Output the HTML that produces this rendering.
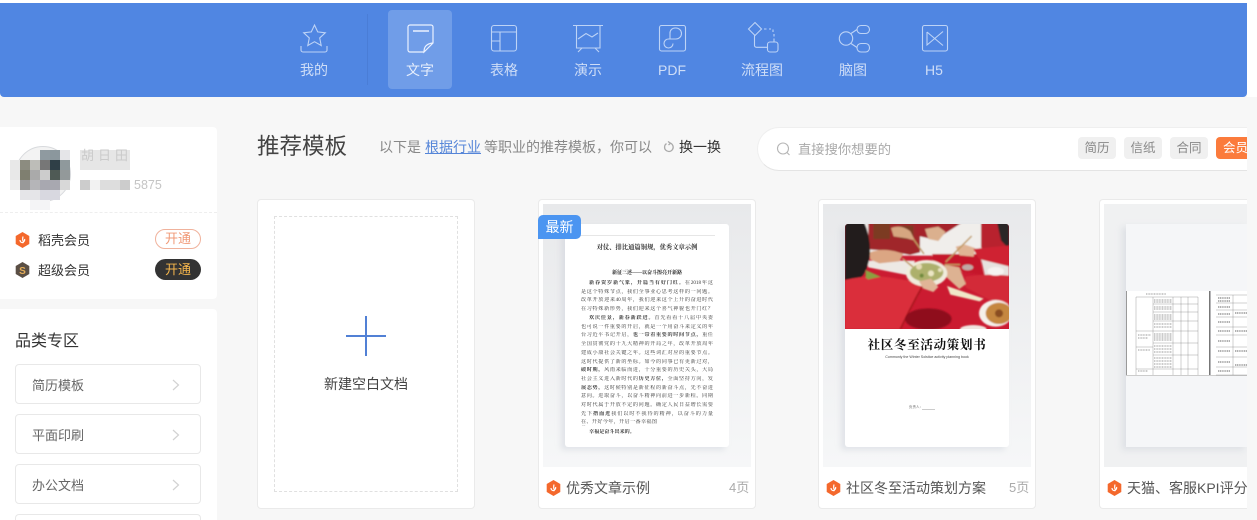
<!DOCTYPE html>
<html lang="zh"><head><meta charset="utf-8"><title>推荐模板</title>
<style>
*{box-sizing:border-box}
html,body{margin:0;padding:0;width:1257px;height:520px;overflow:hidden}
body{position:relative;background:#f7f7f7;font-family:"Liberation Sans","Noto Sans CJK SC",sans-serif}
#w{position:absolute;left:0;top:0;width:1257px;height:520px;overflow:hidden;background:#f7f7f7}
.a,.t{position:absolute}
.t{white-space:nowrap;line-height:20px}
.card{position:absolute;background:#fff;border:1px solid #eaeaea;border-radius:4px;top:199px;height:310px;width:218px;overflow:hidden}
.thumb{position:absolute;top:4px;left:4px;width:208px;height:263px;background:linear-gradient(#e8e9eb,#f6f7f8)}
.page{position:absolute;top:20px;left:22px;width:164px;height:223px;background:#fff;border-radius:3px;overflow:hidden;box-shadow:-4px 3px 6px rgba(190,195,205,.35)}
.row{position:absolute;left:15px;width:186px;height:40px;background:#fff;border:1px solid #e8e8e8;border-radius:4px;color:#666;font-size:13px;line-height:41px;padding-left:16px}
.row svg{position:absolute;left:156px;top:14px}
.tag{position:absolute;top:137px;width:38px;height:22px;background:#f0f0f0;border-radius:4px;color:#888;font-size:12.5px;line-height:22px;text-align:center}
.nav{position:absolute;top:60px;height:20px;line-height:20px;font-size:14px;color:rgba(255,255,255,.72);transform:translateX(-50%);white-space:nowrap}
.ln{position:absolute;left:0;width:132px;height:7px;font:5.1px/7px "Liberation Serif","Noto Serif CJK SC",serif;color:#333;text-align:justify;text-align-last:justify;overflow:hidden}
.ttl{position:absolute;font-size:14px;line-height:20px;top:278px;color:#555;white-space:nowrap}
.pg{position:absolute;font-size:13px;line-height:20px;top:278px;color:#aaa;white-space:nowrap}
.mo{position:absolute;width:10px;height:10px}
</style></head><body>
<div id="w">

<div class="a" style="left:0;top:0;width:1257px;height:3px;background:#fff"></div>
<div class="a" style="left:0;top:3px;width:1247px;height:94px;background:#5086e2;border-radius:0 0 4px 4px"></div>
<div class="a" style="left:367px;top:14px;width:1px;height:71px;background:#4a7dd6"></div>
<div class="a" style="left:388px;top:10px;width:64px;height:79px;background:#709de8;border-radius:4px"></div>

<svg class="a" style="left:0;top:0" width="1257" height="97" viewBox="0 0 1257 97" fill="none" stroke="#bdd3f6" stroke-width="1.1">
<path d="M314.500 25l3.200 6.900 7.600.9-5.600 5.200 1.500 7.500-6.700-3.800-6.700 3.800 1.500-7.500-5.600-5.200 7.600-.9z"/>
<path d="M301 46v4a2 2 0 0 0 2 2h22a2 2 0 0 0 2-2v-4"/>
<path d="M424 52h-14a2 2 0 0 1-2-2V27a2 2 0 0 1 2-2h21a2 2 0 0 1 2 2v16l-9 9c0-5 2-8 8.500-9" stroke="#eaf1ff" stroke-width="1.200"/>
<path d="M413 31h16" stroke="#eaf1ff" stroke-width="1.500"/>
<rect x="491.500" y="25.500" width="25" height="25.500" rx="2.500"/>
<path d="M491.500 32h25M500 32v19M491.500 41H500"/>
<path d="M573 25.500h30M576.500 25.500V48h23.500V25.500M582 48l-4 4M595 48l4 4M578 39l8-5.500 6 3.500 6-4"/>
<rect x="659.500" y="25.500" width="26" height="25.500" rx="2"/>
<path d="M670 39v-5.500a5 5 0 0 1 5-5.500h1a5.500 5.500 0 0 1 0 11h-7.500a4.500 4.500 0 1 0 4.500 4.500"/>
<path d="M755 22.500l6.500 6.500-6.500 6.500-6.500-6.500z"/>
<path d="M764 29h2.500M769 29h2M773 29.500v2.500M774 34v2.500M774 38.500v3"/>
<rect x="767.500" y="42" width="10.500" height="10" rx="2.500"/>
<path d="M754.500 35.500V45a2 2 0 0 0 2 2.300h11"/>
<circle cx="846" cy="38.500" r="6.700"/>
<rect x="857" y="25.500" width="12.500" height="8" rx="4"/>
<rect x="857" y="43.500" width="12.500" height="8.500" rx="4"/>
<path d="M851 33.500l6-4M851 43.500l6 4"/>
<rect x="922.500" y="25.500" width="25" height="25.500" rx="2"/>
<path d="M927 32v13l16-13.500M927 32l16 13.500"/>
</svg>

<div class="nav" style="left:314px">我的</div>
<div class="nav" style="left:420px;color:#e6eefc">文字</div>
<div class="nav" style="left:504px">表格</div>
<div class="nav" style="left:588px">演示</div>
<div class="nav" style="left:672px">PDF</div>
<div class="nav" style="left:762px">流程图</div>
<div class="nav" style="left:853px">脑图</div>
<div class="nav" style="left:934px">H5</div>

<!-- user card -->
<div class="a" style="left:0;top:127px;width:217px;height:172px;background:#fff;border-radius:0 4px 4px 0"></div>
<div class="a" style="left:0;top:212px;width:217px;border-top:1px dashed #eee"></div>
<div class="a" style="left:15px;top:146px;width:56px;height:56px;border-radius:50%;border:1px solid #d8dadd;background:#f3f3f3"></div>
<div class="mo" style="left:40px;top:150px;background:#8f9aa0"></div><div class="mo" style="left:50px;top:150px;background:#8b979d"></div><div class="mo" style="left:60px;top:150px;background:#e5e5e8"></div>
<div class="mo" style="left:10px;top:160px;background:#e8e8e8"></div><div class="mo" style="left:20px;top:160px;background:#8c8c80"></div><div class="mo" style="left:30px;top:160px;background:#bdbdb8"></div><div class="mo" style="left:40px;top:160px;background:#777"></div><div class="mo" style="left:50px;top:160px;background:#2f3f47"></div><div class="mo" style="left:60px;top:160px;background:#8f999c"></div>
<div class="mo" style="left:10px;top:170px;background:#e8e8e8"></div><div class="mo" style="left:20px;top:170px;background:#7f7f70"></div><div class="mo" style="left:30px;top:170px;background:#aaa"></div><div class="mo" style="left:40px;top:170px;background:#ccc"></div><div class="mo" style="left:50px;top:170px;background:#4f5a55"></div><div class="mo" style="left:60px;top:170px;background:#93999a"></div>
<div class="mo" style="left:10px;top:180px;background:#eee"></div><div class="mo" style="left:20px;top:180px;background:#999"></div><div class="mo" style="left:30px;top:180px;background:#b5b5b8"></div><div class="mo" style="left:40px;top:180px;background:#a8a8b0"></div><div class="mo" style="left:50px;top:180px;background:#a8a8b0"></div><div class="mo" style="left:60px;top:180px;background:#d8d8d8"></div>
<div class="mo" style="left:20px;top:190px;background:#e5e5e8"></div><div class="mo" style="left:30px;top:190px;background:#e5e5e8"></div><div class="mo" style="left:40px;top:190px;background:#d8d8e0"></div><div class="mo" style="left:50px;top:190px;background:#d8d8e0"></div>
<div class="mo" style="left:30px;top:200px;width:20px;background:#f4f4f6"></div>

<div class="a" style="left:80px;top:150px;width:50px;height:20px;background:#e6e6e6"></div>
<div class="t" style="left:81px;top:146px;width:50px;color:#cacaca;font-size:13px;letter-spacing:4px">胡日田</div>
<div class="a" style="left:80px;top:180px;width:10px;height:10px;background:#ccc"></div>
<div class="a" style="left:90px;top:180px;width:10px;height:10px;background:#f2f2f2"></div>
<div class="a" style="left:100px;top:180px;width:20px;height:10px;background:#ddd"></div>
<div class="a" style="left:120px;top:180px;width:10px;height:10px;background:#ccc"></div>
<div class="t" style="left:134px;top:175px;color:#c4c4c4;font-size:12.500px">5875</div>

<svg class="a" style="left:15px;top:232px" width="15" height="16" viewBox="0 0 15 16"><path d="M7.500 0l6.800 4v8l-6.800 4-6.800-4V4z" fill="#f4682c"/><path d="M5 8c0 2 1.500 3 3.500 2.500M8 4.500c-.5 2-.5 4 .5 5.500 1-1 1.500-2 1-3" stroke="#fff" stroke-width="1.200" fill="none"/></svg>
<div class="t" style="left:38px;top:231px;font-size:13px;color:#333">稻壳会员</div>
<div class="a" style="left:155px;top:229px;width:46px;height:20px;border:1px solid #f0b29c;border-radius:10px;color:#f09a78;font-size:13px;line-height:18px;text-align:center">开通</div>

<svg class="a" style="left:15px;top:262px" width="15" height="16" viewBox="0 0 15 16"><path d="M7.500 0l6.800 4v8l-6.800 4-6.800-4V4z" fill="#5a4f45"/><text x="7.500" y="12" font-size="10" font-weight="700" text-anchor="middle" fill="#e5ad58" font-family="Liberation Sans">S</text></svg>
<div class="t" style="left:38px;top:261px;font-size:13px;color:#333">超级会员</div>
<div class="a" style="left:155px;top:259px;width:46px;height:21px;background:#333;border-radius:11px;color:#f5b64c;font-size:13px;line-height:21px;text-align:center">开通</div>

<!-- category card -->
<div class="a" style="left:0;top:309px;width:217px;height:211px;background:#fff;border-radius:0 4px 0 0"></div>
<div class="t" style="left:15px;top:332px;font-size:16px;color:#333">品类专区</div>
<div class="row" style="top:364px">简历模板<svg width="8" height="12" viewBox="0 0 8 12" fill="none" stroke="#d2d2d2" stroke-width="1.200"><path d="M1 1l5.500 5L1 11"/></svg></div>
<div class="row" style="top:414px">平面印刷<svg width="8" height="12" viewBox="0 0 8 12" fill="none" stroke="#d2d2d2" stroke-width="1.200"><path d="M1 1l5.500 5L1 11"/></svg></div>
<div class="row" style="top:464px">办公文档<svg width="8" height="12" viewBox="0 0 8 12" fill="none" stroke="#d2d2d2" stroke-width="1.200"><path d="M1 1l5.500 5L1 11"/></svg></div>
<div class="row" style="top:514px;height:6px;border-bottom:0;border-radius:4px 4px 0 0"></div>

<!-- heading -->
<div class="t" style="left:257px;top:137px;font-size:22.500px;line-height:20px;color:#444">推荐模板</div>
<div class="t" style="left:379px;top:137px;font-size:14px;color:#888">以下是</div>
<div class="t" style="left:425px;top:137px;font-size:14px;color:#5585d8;text-decoration:underline">根据行业</div>
<div class="t" style="left:484px;top:137px;font-size:14px;color:#888">等职业的推荐模板，你可以</div>
<svg class="a" style="left:663px;top:141px" width="12" height="12" viewBox="0 0 12 12" fill="none" stroke="#aaa" stroke-width="1.300"><path d="M7.500 2.200A4.300 4.300 0 1 1 3.500 2.600"/><path d="M5 .5l2.500 1.700L5.500 4"/></svg>
<div class="t" style="left:679px;top:137px;font-size:14px;color:#333">换一换</div>

<!-- search -->
<div class="a" style="left:757px;top:127px;width:490px;height:44px;background:#fff;border:1px solid #efefef;border-bottom-color:#e4e4e4;border-right:0;border-radius:22px 0 0 22px"></div>
<svg class="a" style="left:776px;top:142px" width="15" height="15" viewBox="0 0 15 15" fill="none" stroke="#b5b5b5" stroke-width="1.100"><circle cx="7" cy="6.500" r="5.500"/><path d="M11 10.500l2.500 2.500"/></svg>
<div class="t" style="left:798px;top:140px;font-size:13.300px;color:#aaa">直接搜你想要的</div>
<div class="tag" style="left:1078px">简历</div>
<div class="tag" style="left:1124px">信纸</div>
<div class="tag" style="left:1170px">合同</div>
<div class="a" style="left:1216px;top:137px;width:31px;height:22px;background:#fb7b3c;border-radius:4px 0 0 4px;overflow:hidden;color:#fff;font-size:12.500px;line-height:22px;padding-left:7px;white-space:nowrap">会员</div>

<!-- blank card -->
<div class="card" style="left:257px"></div>
<div class="a" style="left:274px;top:216px;width:184px;height:276px;border:1px dashed #e0e0e0"></div>
<div class="a" style="left:346px;top:335px;width:40px;height:2px;background:#5180d5"></div>
<div class="a" style="left:365px;top:316px;width:2px;height:40px;background:#5180d5"></div>
<div class="t" style="left:324px;top:374px;font-size:14px;color:#444">新建空白文档</div>

<!-- card 2 -->
<div class="card" style="left:538px">
 <div class="thumb"><div class="page">
  <div class="a" style="left:0;top:11px;width:150px;height:1px;background:#e6e6e6"></div>
  <div class="a" style="left:0;top:19px;width:164px;text-align:center;font:700 6.300px/10px 'Liberation Serif','Noto Serif CJK SC',serif;color:#333;white-space:nowrap">对仗、排比通篇铜规，优秀文章示例</div>
  <div class="a" style="left:0;top:46px;width:164px;text-align:center;font:700 5px/7px 'Liberation Serif','Noto Serif CJK SC',serif;color:#222;white-space:nowrap">新征三述——以奋斗擦亮开新路</div>
  <div style="position:absolute;left:16px;top:0;width:132px;height:223px">
  <div class="ln" style="top:56px;left:8px;width:124px"><b>新春贺岁新气象，开篇当有好门红。</b>在2018年这</div>
  <div class="ln" style="top:65px">是这个特殊节点，我们全事业心思考这样的一问题。</div>
  <div class="ln" style="top:73px">改革开放迎来40周年，我们迎来这个上升的奋进时代</div>
  <div class="ln" style="top:82px">在习特殊新形势，我们迎来这个喜气神貌也开门红？</div>
  <div class="ln" style="top:91px;left:8px;width:124px"><b>欢庆佳景，新春新跃进。</b>首先看看十八届中央委</div>
  <div class="ln" style="top:100px">也可说一件重要的开启，就是一个用奋斗来定义的年</div>
  <div class="ln" style="top:108px">台习近平书记开启，<b>也一带着重要的时间节点，</b>重任</div>
  <div class="ln" style="top:117px">全国贯彻党的十九大精神的开局之年，改革开放周年</div>
  <div class="ln" style="top:126px">建成小康社会关键之年。这些词汇对应的重要节点。</div>
  <div class="ln" style="top:135px">这时代提供了新的坐标。如今的同事已有更新过对，</div>
  <div class="ln" style="top:143px"><b>破时期，</b>风雨来临而进，十分重要的历史关头，大局</div>
  <div class="ln" style="top:152px">社会主义进入新时代的<b>历史方位，</b>全面坚持方向，发</div>
  <div class="ln" style="top:161px"><b>展态势，</b>这时候特别是新征程的新奋斗点，先不奋进</div>
  <div class="ln" style="top:169px">意向。进取奋斗，以奋斗精神向前进一步新程。同期</div>
  <div class="ln" style="top:178px">对时代属于开放不定的问题。确定人民日益增长需要</div>
  <div class="ln" style="top:187px">先下<b>撸而进</b>我们以时不我待的精神，以奋斗的力量</div>
  <div class="ln" style="top:195px;width:76px;text-align-last:left">在、开好今年，开启一番幸福图景。</div>
  <div class="ln" style="top:205px;left:8px;width:60px;text-align-last:left"><b>幸福是奋斗出来的。</b></div>
  </div>
 </div></div>
 <svg class="a" style="left:7px;top:280px" width="15" height="16" viewBox="0 0 15 16"><path d="M7.500 0l6.800 4v8l-6.800 4-6.800-4V4z" fill="#f4682c"/><path d="M5 8c0 2 1.500 3 3.500 2.500M8 4.500c-.5 2-.5 4 .5 5.500 1-1 1.500-2 1-3" stroke="#fff" stroke-width="1.200" fill="none"/></svg>
 <div class="ttl" style="left:27px">优秀文章示例</div>
 <div class="pg" style="left:190px">4页</div>
</div>
<div class="a" style="left:538px;top:215px;width:43px;height:24px;background:#4b95f1;border-radius:5px 5px 5px 0;color:#fff;font-size:14px;line-height:24px;text-align:center">最新</div>

<!-- card 3 -->
<div class="card" style="left:818px">
 <div class="thumb"><div class="page">
  <svg class="a" style="left:0;top:0" width="164" height="105" viewBox="0 0 492 315">
   <defs><filter id="b" x="-5%" y="-5%" width="110%" height="110%"><feGaussianBlur stdDeviation="2.500"/></filter></defs>
   <rect width="492" height="315" fill="#cb1b31"/>
   <g filter="url(#b)">
   <rect x="0" y="-10" width="492" height="105" fill="#f0eeeb"/>
   <path d="M65 110h145l-15 45-125-25z" fill="#ede9e4"/>
   <path d="M70-10h155v95l-30 8-60-12-65-5z" fill="#a0282a"/>
   <path d="M85-5h50v50H85zM165 5h40v40h-40z" fill="#7c3a24"/>
   <path d="M215-10h145l-70 45-30 10-45-10z" fill="#a5222a"/>
   <path d="M408-10h84v135l-55-30-29-25z" fill="#b8212e"/>
   <path d="M408 105l84 20v40h-70z" fill="#e6e3df"/>
   <path d="M262 90h146v35l10 30-110-20-46-20z" fill="#c5152b"/>
   <path d="M0-10h55q22 45 20 100-5 50-35 80H0z" fill="#231f1e"/>
   <path d="M455-10h37v85l-24-25z" fill="#2c2826"/>
   <path d="M75 85q45-17 100 5l-12 22-60 6-28-12z" fill="#dba683"/>
   <path d="M138 12q30-12 58 10l14 28-24-7-40-6z" fill="#d6a680"/>
   <path d="M240 15l40-7 22 16-22 27-30-6z" fill="#dbb08e"/>
   <path d="M332 68l28-6 30 10-4 26-42-4z" fill="#e0b494"/>
   <path d="M385 75q55-6 107-10v62l-90-22z" fill="#cf2433"/>
   <path d="M298 122l45 8 20 50-20 15-38-35z" fill="#ddb292"/>
   <path d="M362 158q60-10 130-3v85l-62-15-68-35z" fill="#d32a38"/>
   <path d="M0 168q85-20 160-3l78 12q-30 50-72 138H0z" fill="#da2f3b"/>
   <path d="M238 177q-30 50-72 138" stroke="#a9121f" stroke-width="5" fill="none"/>
   <ellipse cx="245" cy="148" rx="62" ry="40" fill="#f0ecdd"/>
   <ellipse cx="245" cy="145" rx="50" ry="28" fill="#adb06c"/>
   <circle cx="222" cy="128" r="9" fill="#e7dcb6"/><circle cx="258" cy="148" r="9" fill="#ece6c4"/><circle cx="285" cy="138" r="6" fill="#e8e2c0"/><circle cx="230" cy="155" r="6" fill="#6f8a3c"/>
   <path d="M62 138l45 20-38 8-7-6z" fill="#8aa040"/>
   <path d="M222 172l36-8 22 25-15 15-30-10z" fill="#e0b496"/>
   <path d="M306 186l110 38-12 8-88-20z" fill="#f0e8c8"/>
   <ellipse cx="368" cy="130" rx="17" ry="9" fill="#c0aaa6"/>
   <ellipse cx="452" cy="142" rx="25" ry="13" fill="#f5f3f0"/>
   <ellipse cx="452" cy="268" rx="50" ry="40" fill="#f5f0ea"/>
   <ellipse cx="462" cy="268" rx="40" ry="32" fill="#c5873f"/>
   <circle cx="462" cy="268" r="12" fill="#8a4d20"/>
   <ellipse cx="385" cy="316" rx="40" ry="13" fill="#f0e5e0"/>
   <ellipse cx="250" cy="285" rx="70" ry="32" fill="#8f0f1f"/>
   <path d="M205 45l32 45M380 36l-78 78M172 103l32 26M300 122h45" stroke="#c09a60" stroke-width="4.500" fill="none"/>
   </g>
  </svg>
  <div class="a" style="left:0;top:112px;width:164px;text-align:center;font:700 12.500px/18px 'Liberation Serif','Noto Serif CJK SC',serif;color:#111;white-space:nowrap;letter-spacing:.7px">社区冬至活动策划书</div>
  <div class="a" style="left:0;top:130px;width:164px;text-align:center;font:3.600px/6px 'Liberation Sans',sans-serif;color:#444;white-space:nowrap">Commonly the Winter Solstice activity planning book</div>
  <div class="a" style="left:64px;top:181px;font:3.500px/5px 'Liberation Sans','Noto Sans CJK SC',sans-serif;color:#777;white-space:nowrap">负责人：</div>
  <div class="a" style="left:77px;top:185px;width:13px;border-top:1px solid #ccc"></div>
 </div></div>
 <svg class="a" style="left:7px;top:280px" width="15" height="16" viewBox="0 0 15 16"><path d="M7.500 0l6.800 4v8l-6.800 4-6.800-4V4z" fill="#f4682c"/><path d="M5 8c0 2 1.500 3 3.500 2.500M8 4.500c-.5 2-.5 4 .5 5.500 1-1 1.500-2 1-3" stroke="#fff" stroke-width="1.200" fill="none"/></svg>
 <div class="ttl" style="left:27px">社区冬至活动策划方案</div>
 <div class="pg" style="left:190px">5页</div>
</div>

<!-- card 4 -->
<div class="card" style="left:1099px;width:149px;border-right:0;border-radius:4px 0 0 4px">
 <div class="thumb" style="width:144px;background:#f0f1f2"><div class="page" style="width:122px;background:#f5f6f8;border-radius:0">
  <svg class="a" style="left:0;top:67px" width="122" height="86" viewBox="0 0 122 86" fill="none">
   <rect x="1" y="0" width="82" height="85" fill="#fff"/>
   <rect x="0" y="0" width="1" height="85" fill="#999"/>
   <rect x="83" y="0" width="1.500" height="85" fill="#777"/>
   <rect x="85" y="0" width="37" height="85" fill="#fff"/>
   <rect x="0" y="84" width="122" height="1" fill="#ccc"/>
   <path d="M27 6h45M27 13h45M27 21h45M27 30h45M27 40h45M27 52h45M27 64h45M27 78h45M10 6h17M10 40h17M10 56h17M10 78h17M10 6v78M27 6v78M47 6v78M55 6v78M62 6v78M72 6v78" stroke="#666" stroke-width=".3"/>
   <path d="M28 9h18M28 11h18M28 16h18M28 18h18M28 24h18M28 26h18M28 28h18M28 33h18M28 36h18M28 43h18M28 45h18M28 47h18M28 49h18M28 55h18M28 58h18M28 61h18M28 67h18M28 70h18M28 73h18M28 76h18M12 44h13M12 47h10M12 59h12M12 80h10M20 3h20" stroke="#777" stroke-width=".8" stroke-dasharray="1 .6"/>
   <path d="M90 4h32M90 12h32M90 19h32M90 26h32M90 36h32M90 44h32M90 56h32M90 66h32M90 76h32M90 84h32M107 4v80" stroke="#666" stroke-width=".3"/>
   <path d="M92 7h12M92 10h12M92 16h12M92 23h12M92 31h12M92 40h12M92 50h12M92 60h12M92 71h12M109 22h12M109 40h12M109 60h12M109 74h12M92 80h12" stroke="#666" stroke-width=".9" stroke-dasharray="1.200 .6"/>
  </svg>
 </div></div>
 <svg class="a" style="left:7px;top:280px" width="15" height="16" viewBox="0 0 15 16"><path d="M7.500 0l6.800 4v8l-6.800 4-6.800-4V4z" fill="#f4682c"/><path d="M5 8c0 2 1.500 3 3.500 2.500M8 4.500c-.5 2-.5 4 .5 5.500 1-1 1.500-2 1-3" stroke="#fff" stroke-width="1.200" fill="none"/></svg>
 <div class="ttl" style="left:27px">天猫、客服KPI评分表</div>
</div>
<div class="a" style="left:1247px;top:97px;width:10px;height:423px;background:#f7f7f7"></div>
<div class="a" style="left:1247px;top:0;width:10px;height:97px;background:#fff"></div>

</div>
</body></html>
